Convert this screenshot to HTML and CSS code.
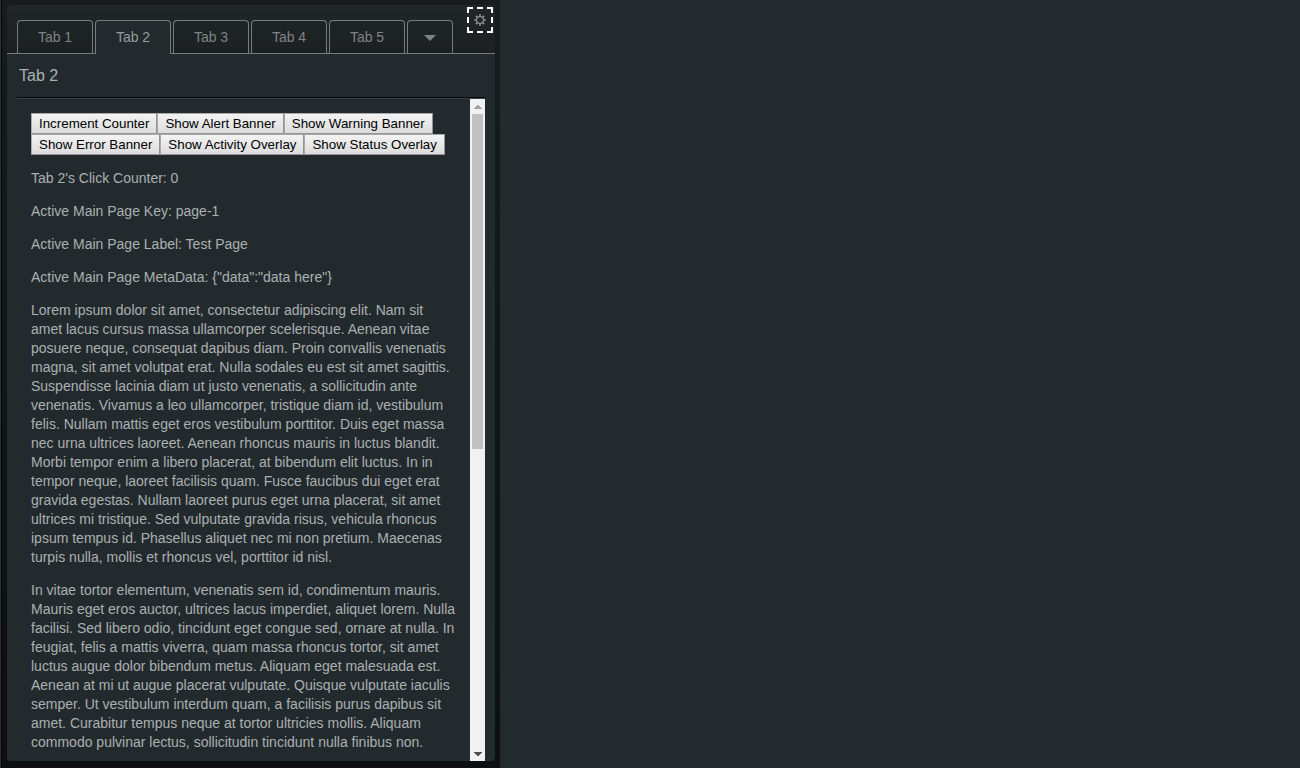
FILE: index.html
```html
<!DOCTYPE html>
<html lang="en">
<head>
<meta charset="utf-8">
<title>Tab 2</title>
<link rel="stylesheet" href="styles.css">
</head>
<body>
<aside class="sidebar">
  <div class="panel">
    <header class="tabbar">
      <nav class="tabs" role="tablist">
        <button class="tab" role="tab" type="button">Tab 1</button>
        <button class="tab tab-active" role="tab" type="button" aria-selected="true">Tab 2</button>
        <button class="tab" role="tab" type="button">Tab 3</button>
        <button class="tab" role="tab" type="button">Tab 4</button>
        <button class="tab" role="tab" type="button">Tab 5</button>
        <button class="tab tab-more" type="button" aria-label="More tabs">
          <svg width="12" height="6" viewBox="0 0 12 6"><path d="M0 0H12L6 6Z" fill="currentColor"/></svg>
        </button>
      </nav>
      <button class="gear" type="button" aria-label="Settings">
        <svg class="gear-frame" width="26" height="26" viewBox="0 0 26 26" fill="#fff">
          <path d="M0 0h6v2H2v4H0zM10 0h6v2h-6zM20 0h6v6h-2V2h-4zM24 10h2v6h-2zM24 20h2v6h-6v-2h4zM10 24h6v2h-6zM0 20h2v4h4v2H0zM0 10h2v6H0z"/>
        </svg>
        <svg width="12" height="12" viewBox="0 0 12 12" fill="none" stroke="currentColor">
          <circle cx="6" cy="6" r="3.5" stroke-width="1.5"/>
          <path d="M6 0V2.5M6 9.5V12M0 6H2.5M9.5 6H12M1.7 1.7L3.5 3.5M8.5 8.5L10.3 10.3M10.3 1.7L8.5 3.5M3.5 8.5L1.7 10.3" stroke-width="1.6"/>
        </svg>
      </button>
    </header>
    <h1 class="title">Tab 2</h1>
    <div class="viewport">
      <main class="content">
        <div class="actions"><button class="action" type="button">Increment Counter</button><button class="action" type="button">Show Alert Banner</button><button class="action" type="button">Show Warning Banner</button><button class="action" type="button">Show Error Banner</button><button class="action" type="button">Show Activity Overlay</button><button class="action" type="button">Show Status Overlay</button></div>
        <p>Tab 2's Click Counter: 0</p>
        <p>Active Main Page Key: page-1</p>
        <p>Active Main Page Label: Test Page</p>
        <p>Active Main Page MetaData: {"data":"data here"}</p>
        <p>Lorem ipsum dolor sit amet, consectetur adipiscing elit. Nam sit amet lacus cursus massa ullamcorper scelerisque. Aenean vitae posuere neque, consequat dapibus diam. Proin convallis venenatis magna, sit amet volutpat erat. Nulla sodales eu est sit amet sagittis. Suspendisse lacinia diam ut justo venenatis, a sollicitudin ante venenatis. Vivamus a leo ullamcorper, tristique diam id, vestibulum felis. Nullam mattis eget eros vestibulum porttitor. Duis eget massa nec urna ultrices laoreet. Aenean rhoncus mauris in luctus blandit. Morbi tempor enim a libero placerat, at bibendum elit luctus. In in tempor neque, laoreet facilisis quam. Fusce faucibus dui eget erat gravida egestas. Nullam laoreet purus eget urna placerat, sit amet ultrices mi tristique. Sed vulputate gravida risus, vehicula rhoncus ipsum tempus id. Phasellus aliquet nec mi non pretium. Maecenas turpis nulla, mollis et rhoncus vel, porttitor id nisl.</p>
        <p>In vitae tortor elementum, venenatis sem id, condimentum mauris. Mauris eget eros auctor, ultrices lacus imperdiet, aliquet lorem. Nulla facilisi. Sed libero odio, tincidunt eget congue sed, ornare at nulla. In feugiat, felis a mattis viverra, quam massa rhoncus tortor, sit amet luctus augue dolor bibendum metus. Aliquam eget malesuada est. Aenean at mi ut augue placerat vulputate. Quisque vulputate iaculis semper. Ut vestibulum interdum quam, a facilisis purus dapibus sit amet. Curabitur tempus neque at tortor ultricies mollis. Aliquam commodo pulvinar lectus, sollicitudin tincidunt nulla finibus non.</p>
      </main>
      <div class="scrollbar" aria-hidden="true">
        <div class="scroll-arrow"><svg width="8" height="4" viewBox="0 0 8 4" shape-rendering="crispEdges"><path d="M3 0h2v1h1v1h1v1h1v1H0V3h1V2h1V1h1z" fill="#a3a3a3"/></svg></div>
        <div class="scroll-track"><div class="scroll-thumb"></div></div>
        <div class="scroll-arrow"><svg width="8" height="4" viewBox="0 0 8 4" shape-rendering="crispEdges"><path d="M0 0h8v1H7v1H6v1H5v1H3V3H2V2H1V1H0z" fill="#505050"/></svg></div>
      </div>
    </div>
  </div>
</aside>
</body>
</html>
```
FILE: styles.css
```css
* {
  box-sizing: border-box;
}

body {
  margin: 0;
  height: 100vh;
  display: flex;
  overflow: hidden;
  background: #232a2d;
  color: #abb0b2;
  font-family: "Liberation Sans", Arial, sans-serif;
  font-size: 14px;
  line-height: 19px;
}

.sidebar {
  display: flex;
  width: 500px;
  padding: 5px 5px 7px;
  border-left: 1px solid #2b3134;
  box-shadow: inset 1px 0 #050606;
  background: linear-gradient(#181c1e, #0d0f10);
}

.panel {
  flex: 1;
  min-width: 0;
  margin-left: 1px;
  display: flex;
  flex-direction: column;
  border-radius: 4px;
  background: #232a2d;
  overflow: hidden;
}

.tabbar {
  display: flex;
  justify-content: space-between;
  align-items: flex-start;
  height: 49px;
  padding: 2px 2px 0 10px;
  border-bottom: 1px solid #767c7e;
  background: linear-gradient(#202629, #1c2022);
}

.tabs {
  display: flex;
  gap: 2px;
  padding-top: 13px;
}

.tab {
  width: 76px;
  height: 33px;
  padding: 0;
  border: 1px solid #767c7e;
  border-bottom: 0;
  border-radius: 4px 4px 0 0;
  background: transparent;
  color: #7e8486;
  font: inherit;
}

.tab-active {
  height: 34px;
  padding-bottom: 1px;
  background: #232a2d;
  color: #969c9e;
}

.tab-more {
  display: flex;
  align-items: center;
  justify-content: center;
  width: 46px;
  padding-top: 2px;
}

.gear {
  position: relative;
  display: flex;
  align-items: center;
  justify-content: center;
  width: 26px;
  height: 26px;
  padding: 0;
  border: 0;
  background: transparent;
  color: #85898b;
}

.gear-frame {
  position: absolute;
  inset: 0;
}

.title {
  margin: 0 10px;
  height: 44px;
  padding: 0 2px;
  border-bottom: 1px solid #070909;
  font-size: 16px;
  font-weight: normal;
  line-height: 43px;
}

.viewport {
  flex: 1;
  min-height: 0;
  display: flex;
  margin: 0 10px;
  border-top: 1px solid #3b4245;
}

.content {
  flex: 1;
  min-width: 0;
  padding: 14px 14px 480px;
  overflow-y: auto;
  scrollbar-width: none;
}

.content p {
  margin: 14px 0 0;
}

.actions {
  display: flex;
  flex-wrap: wrap;
}

.action {
  height: 21px;
  padding: 0 7px;
  border: 1px solid;
  border-color: #a9a9a9 #949494 #949494 #a9a9a9;
  background: linear-gradient(#f3f3f3, #dcdcdc);
  color: #000;
  font-family: "Liberation Sans", Arial, sans-serif;
}

.scrollbar {
  display: flex;
  flex-direction: column;
  width: 15px;
  background: #f1f1f1;
}

.scroll-arrow {
  display: flex;
  align-items: center;
  justify-content: center;
  height: 15px;
}

.scroll-track {
  flex: 1;
  padding: 0 2px;
}

.scroll-thumb {
  height: 53%;
  background: #c1c1c1;
}
```
